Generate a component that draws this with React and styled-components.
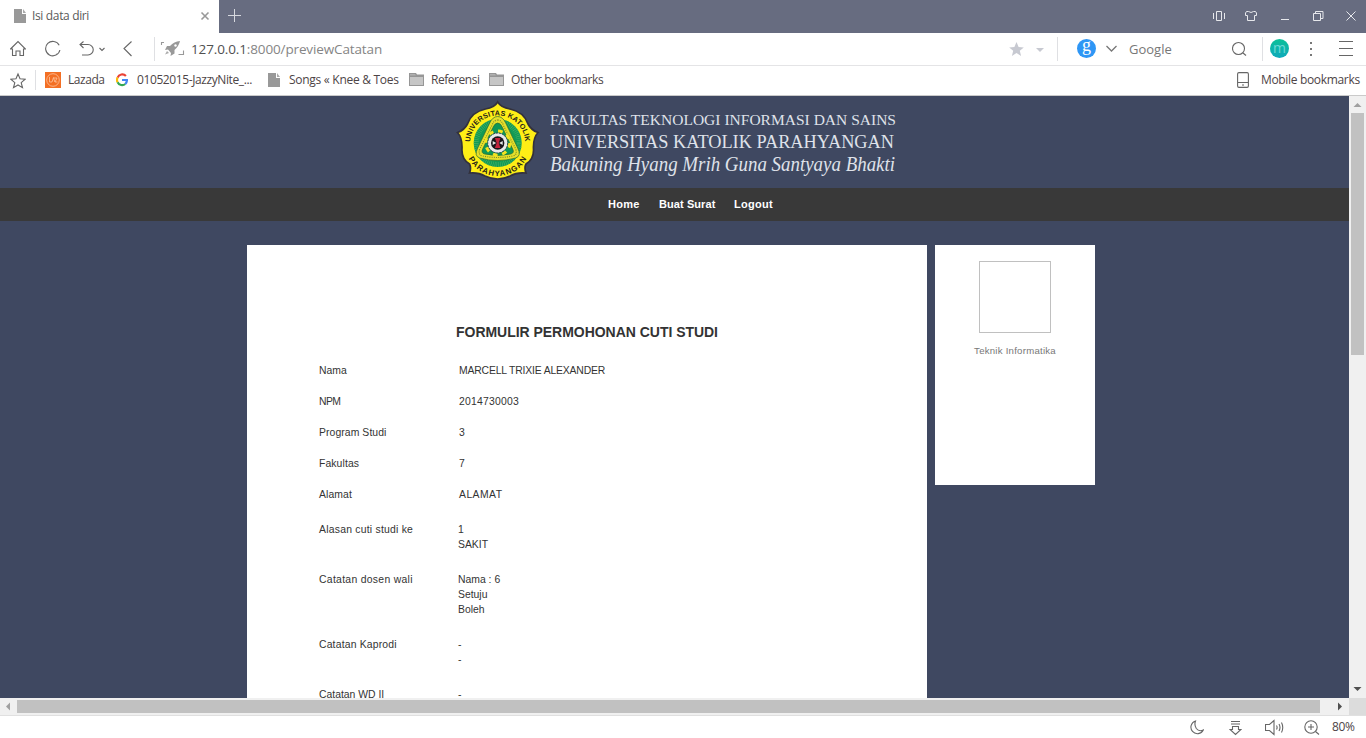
import React from "react";
import styled, { createGlobalStyle } from "styled-components";

const GlobalStyle = createGlobalStyle`
  * { box-sizing: border-box; }
  html, body { margin: 0; padding: 0; overflow: hidden; }
  body { font-family: "Open Sans", "Noto Sans", sans-serif; font-size: 12px; color: #4a4a4a; }
`;

const Window = styled.div`
  width: 1366px;
  height: 738px;
  display: flex;
  flex-direction: column;
  background: #fff;
  overflow: hidden;
`;

const TabBar = styled.div`
  height: 33px;
  flex: none;
  display: flex;
  background: #676c80;
`;

const Tab = styled.div`
  width: 219px;
  height: 33px;
  display: flex;
  background: #fff;
  padding-left: 14px;
`;

const Toolbar = styled.div`
  height: 33px;
  flex: none;
  display: flex;
  border-bottom: 1px solid #e4e4e6;
`;

const BookmarksBar = styled.div`
  height: 30px;
  flex: none;
  display: flex;
  border-bottom: 1px solid #cacaca;
`;

const Icon = styled.svg`
  flex: none;
  display: block;
  height: 100%;
  width: ${(p) => p.$w}px;
  margin-left: ${(p) => p.$gap || 0}px;
  fill: none;
  stroke: ${(p) => p.$color || "#666"};
  stroke-width: 1.1;
`;

const Label = styled.span`
  flex: none;
  display: block;
  width: ${(p) => p.$w}px;
  margin-left: ${(p) => p.$gap || 0}px;
  line-height: ${(p) => p.$line}px;
  font-size: ${(p) => p.$size || 12}px;
  letter-spacing: ${(p) => p.$spacing || 0}px;
  color: ${(p) => p.$color || "#4d4446"};
  white-space: nowrap;
`;

const Host = styled.span`
  color: #505050;
`;

const Divider = styled.div`
  flex: none;
  width: 1px;
  height: ${(p) => p.$h}px;
  margin: 4px 0 0 ${(p) => p.$gap}px;
  background: #dfe0e3;
`;

const Spacer = styled.div`
  flex: 1;
`;

const Badge = styled.div`
  flex: none;
  width: 19px;
  height: 19px;
  margin: 6px 0 0 ${(p) => p.$gap}px;
  border-radius: 50%;
  background: ${(p) => p.$bg};
  color: ${(p) => p.$color};
  text-align: center;
  font: ${(p) => p.$font};
`;

const Viewport = styled.div`
  flex: none;
  height: 602px;
  display: flex;
`;

const Page = styled.div`
  width: 1349px;
  height: 602px;
  background: #3f4861;
  overflow: hidden;
  font-family: "Liberation Sans", Arial, sans-serif;
`;

const Banner = styled.header`
  height: 92px;
  padding: 4px 0 0 455px;
`;

const LogoArt = styled.svg`
  display: block;
  overflow: visible;
`;

const Nav = styled.nav`
  height: 33px;
  display: flex;
  gap: 19px;
  padding-left: 608px;
  background: #393939;
`;

const NavLink = styled.a`
  width: ${(p) => p.$w}px;
  line-height: 32px;
  font-size: 11px;
  font-weight: bold;
  letter-spacing: ${(p) => p.$spacing}px;
  color: #fff;
  white-space: nowrap;
`;

const Content = styled.main`
  display: flex;
  align-items: flex-start;
  gap: 8px;
  padding: 24px 0 0 247px;
`;

const Paper = styled.section`
  width: 680px;
  height: 700px;
  flex: none;
  padding: 79px 72px 0;
  background: #fff;
  color: #333;
`;

const Title = styled.h1`
  margin: 0 0 23px;
  text-align: center;
  font-size: 14px;
  line-height: 16px;
  font-weight: bold;
  letter-spacing: -0.03px;
  white-space: nowrap;
`;

const Row = styled.div`
  display: flex;
  font-size: 10.4px;
  line-height: 15px;
  margin-bottom: ${(p) => p.$after}px;
`;

const Key = styled.div`
  width: ${(p) => p.$w}px;
  letter-spacing: ${(p) => p.$spacing || 0}px;
  white-space: nowrap;
`;

const Value = styled.div`
  letter-spacing: ${(p) => p.$spacing || 0}px;
  white-space: nowrap;
`;

const Profile = styled.aside`
  width: 160px;
  height: 240px;
  flex: none;
  display: flex;
  flex-direction: column;
  align-items: center;
  padding-top: 16px;
  background: #fff;
`;

const Photo = styled.div`
  width: 72px;
  height: 72px;
  border: 1px solid #c0c0c0;
`;

const Major = styled.div`
  margin-top: 11px;
  font-size: 9.6px;
  line-height: 14px;
  letter-spacing: 0.25px;
  color: #777;
`;

const VScroll = styled.div`
  width: 17px;
  display: flex;
  flex-direction: column;
  align-items: center;
  background: #f0f0f0;
`;

const VThumb = styled.div`
  width: 13px;
  height: 242px;
  background: #c1c1c1;
`;

const HScroll = styled.div`
  height: 18px;
  flex: none;
  display: flex;
  background: #f0f0f0;
  border-bottom: 1px solid #e0e0e0;
`;

const HThumb = styled.div`
  width: 1303px;
  height: 13px;
  margin-top: 2px;
  background: #c1c1c1;
`;

const Corner = styled.div`
  width: 17px;
  height: 17px;
  background: #dcdcdc;
`;

const Arrow = styled.svg`
  display: block;
  flex: none;
  width: ${(p) => p.$w || 17}px;
  height: 17px;
  fill: ${(p) => p.$color};
`;

const StatusBar = styled.div`
  height: 22px;
  display: flex;
`;

const FileIcon = ({ gap, h, top }) => (
  <Icon $w={12} $gap={gap} viewBox={`0 0 12 ${h}`}>
    <g stroke="none">
      <path d={`M0 ${top}h8v5h4v9H0z`} fill="#999" />
      <path d={`M9 ${top}l3 4H9z`} fill="#aaa" />
    </g>
  </Icon>
);

const FolderIcon = ({ gap }) => (
  <Icon $w={15} $gap={gap} viewBox="0 0 15 29">
    <g stroke="none">
      <path d="M0 7h7l1 1.5h7V20H0z" fill="#969696" />
      <path d="M1 11h13v8H1z" fill="#c6c6c6" />
      <path d="M1 8h5l1 1.5H1z" fill="#b0b0b0" />
    </g>
  </Icon>
);

const Crest = () => (
  <g transform="translate(2 1)">
    <defs>
      <path id="crestTop" d="M13.200 42A27.500 27.500 0 0 1 68.200 42" />
      <path id="crestBottom" d="M7.700 42A33 33 0 0 0 73.700 42" />
    </defs>
    <path
      d="M40.700 1Q44 6.500 53 8Q67 11 71 23Q74 29 81 31.500Q76 37 76.500 48Q77 58 69 63Q67 67 69 72Q60 71 53 75Q47 78 40.700 78Q34 78 28 75Q21 71 12.500 72Q14.500 67 12.500 63Q4.500 58 5 48Q5.500 37 .5 31.500Q7.500 29 10.500 23Q14.500 11 28.500 8Q37.500 6.500 40.700 1Z"
      fill="#ffee16"
      stroke="#33313c"
      strokeWidth="1.700"
    />
    <g transform="translate(.7 0)">
      <circle cx="40" cy="42" r="24" fill="#129a55" />
      <circle cx="40" cy="42" r="21.500" fill="none" stroke="#54b36a" strokeWidth="5" strokeDasharray=".5 1.400" />
      <path d="M40 15.500Q45 15.500 48 22L60 47Q64 55 58 57Q40 62 22 57Q16 55 20 47L32 22Q35 15.500 40 15.500Z" fill="#e6e02a" stroke="#2b6a34" strokeWidth=".7" />
      <path d="M40 22Q43 22 45 27L55 48Q57 52 53 53Q40 56 27 53Q23 52 25 48L35 27Q37 22 40 22Z" fill="#0e9857" stroke="#2b6a34" strokeWidth=".7" />
      <path d="M40 19Q44 19 46 25L58 48Q60 54 55 55Q40 58 25 55Q20 54 22 48L34 25Q36 19 40 19Z" fill="none" stroke="#7f8a28" strokeWidth="1.200" strokeDasharray="1 1.2" />
      <circle cx="40" cy="42" r="12" fill="none" stroke="#f4e31f" strokeWidth="3" strokeDasharray="4.700 4.725" />
      <circle cx="40" cy="42" r="10" fill="#e9e9e9" stroke="#35404a" strokeWidth="1" strokeDasharray="2 1" />
      <circle cx="40" cy="42" r="6.700" fill="#18151a" />
      <path d="M37.200 37h5.600L41 42l1.800 5h-5.600L39 42z" fill="#c3223c" />
      <path d="M35 40l3.500 2-3.500 2zM45 40l-3.500 2 3.500 2z" fill="#e6e6e6" />
    </g>
    <g fill="#262318" fontFamily="Liberation Sans, Arial, sans-serif">
      <text fontSize="7.200" fontWeight="bold">
        <textPath href="#crestTop" startOffset="1" textLength="84">UNIVERSITAS KATOLIK</textPath>
      </text>
      <text fontSize="7.800" fontWeight="bold">
        <textPath href="#crestBottom" startOffset="16" textLength="71">PARAHYANGAN</textPath>
      </text>
    </g>
  </g>
);

const Logo = () => (
  <LogoArt width="450" height="84" viewBox="0 0 450 84">
    <Crest />
    <g fill="#dfe2ea" fontFamily="Liberation Serif, Times New Roman, serif">
      <text x="95" y="25" fontSize="15.5" textLength="346" lengthAdjust="spacingAndGlyphs">FAKULTAS TEKNOLOGI INFORMASI DAN SAINS</text>
      <text x="95" y="48" fontSize="19" textLength="344" lengthAdjust="spacingAndGlyphs">UNIVERSITAS KATOLIK PARAHYANGAN</text>
      <text x="95" y="71" fontSize="21" fontStyle="italic" textLength="345" lengthAdjust="spacingAndGlyphs">Bakuning Hyang Mrih Guna Santyaya Bhakti</text>
    </g>
  </LogoArt>
);

const rows = [
  { k: "Nama", v: ["MARCELL TRIXIE ALEXANDER"], after: 16, vs: -0.17 },
  { k: "NPM", v: ["2014730003"], after: 16, ks: -0.6, vs: 0.23 },
  { k: "Program Studi", v: ["3"], after: 16, ks: 0.08 },
  { k: "Fakultas", v: ["7"], after: 16, ks: 0.1 },
  { k: "Alamat", v: ["ALAMAT"], after: 20, ks: 0.1, vs: 0.45 },
  { k: "Alasan cuti studi ke", v: ["1", "SAKIT"], after: 20, w: 139, ks: 0.23 },
  { k: "Catatan dosen wali", v: ["Nama : 6", "Setuju", "Boleh"], after: 20, w: 139, ks: 0.3 },
  { k: "Catatan Kaprodi", v: ["-", "-"], after: 20, w: 139, ks: 0.17 },
  { k: "Catatan WD II", v: ["-"], after: 20, w: 139 },
];

export default function App() {
  return (
    <Window>
      <GlobalStyle />
      <TabBar>
        <Tab>
          <FileIcon gap={0} h={33} top={9} />
          <Label $w={57} $gap={6} $line={32} $color="#5a5a5a" $spacing={-0.35}>Isi data diri</Label>
          <Icon $w={10} $gap={111} $color="#999" viewBox="0 0 10 33">
            <path d="M1.500 12.500l7 7M8.500 12.500l-7 7" strokeWidth="1.6" />
          </Icon>
        </Tab>
        <Icon $w={13} $gap={9} $color="#d7d9df" viewBox="0 0 13 33">
          <path d="M0 15.500h13M6.500 9v13" strokeWidth="1" />
        </Icon>
        <Spacer />
        <Icon $w={14} $color="#e7e8ec" viewBox="0 0 14 33">
          <path d="M4.500 11.500h5v9h-5zM1.500 13v6M12.500 13v6" strokeWidth="1" />
        </Icon>
        <Icon $w={12} $gap={19} $color="#e7e8ec" viewBox="0 0 12 33">
          <path d="M3.500 11.500h-2l-1 1.500v2.500h2v5h7v-5h2V13l-1-1.500h-2q-2.500 2-5 0z" strokeWidth="1" />
        </Icon>
        <Icon $w={8} $gap={24} $color="#e7e8ec" viewBox="0 0 8 33">
          <path d="M0 19.500h8" strokeWidth="1" />
        </Icon>
        <Icon $w={11} $gap={24} $color="#e7e8ec" viewBox="0 0 11 33">
          <path d="M.5 13.500h7v7h-7zM2.500 13v-1.500h7.500v7H8" strokeWidth="1" />
        </Icon>
        <Icon $w={10} $gap={22} $color="#e7e8ec" viewBox="0 0 10 33">
          <path d="M.5 11.500l9 9M9.500 11.500l-9 9" strokeWidth="1" />
        </Icon>
        <Icon $w={10} viewBox="0 0 10 33" />
      </TabBar>

      <Toolbar>
        <Icon $w={16} $gap={10} viewBox="0 0 16 32">
          <path d="M.5 16L8 8.500l7.500 7.500h-2v6.500H10V18H6v4.500H2.500V16z" />
        </Icon>
        <Icon $w={16} $gap={19} viewBox="0 0 16 32">
          <path d="M14.900 17A7.200 7.200 0 1 1 14.200 12.200M12.400 20.600l-1 1" />
        </Icon>
        <Icon $w={15} $gap={18} viewBox="0 0 15 32">
          <path d="M4.500 8.500L1 11.500l3.500 3.500M1 11.500h8a5 5 0 0 1 0 10.500H3" />
        </Icon>
        <Icon $w={6} $gap={5} viewBox="0 0 6 32">
          <path d="M.5 15L3 17.500 5.500 15" />
        </Icon>
        <Icon $w={9} $gap={18} viewBox="0 0 9 32">
          <path d="M8.500 8.500L1 15.500l7.500 7.500" />
        </Icon>
        <Divider $gap={22} $h={24} />
        <Icon $w={25} $gap={5} $color="#999" viewBox="0 0 25 32">
          <path d="M1.500 12V9.500H4M23.500 17.500v4h-5" />
          <path d="M20 8Q14 8.500 10 13H7l-2 4 3-.5 3 3.500-.5 3 4-2.500V17Q19 13 20 8z" fill="#999" stroke="none" />
          <path d="M7 18l-2 3.500L9 20" fill="#aaa" stroke="none" />
          <circle cx="15.500" cy="12.500" r="1.200" fill="#fff" stroke="none" />
        </Icon>
        <Label $w={193} $gap={6} $line={32} $size={13.5} $color="#858585" $spacing={-0.13}>
          <Host>127.0.0.1</Host>:8000/previewCatatan
        </Label>
        <Spacer />
        <Icon $w={15} viewBox="0 0 15 32">
          <path d="M7.500 9l2.100 5 5.200.4-4 3.400 1.300 5.200-4.600-2.900L2.900 23l1.300-5.200-4-3.400 5.200-.4z" fill="#c7c9d1" stroke="none" />
        </Icon>
        <Icon $w={8} $gap={12} viewBox="0 0 8 32">
          <path d="M0 15h8l-4 4z" fill="#c7c9d1" stroke="none" />
        </Icon>
        <Divider $gap={13} $h={24} />
        <Badge $gap={19} $bg="#2e96f5" $color="#fff" $font='18px/13px "Liberation Serif", serif'>g</Badge>
        <Icon $w={11} $gap={10} $color="#777" viewBox="0 0 11 32">
          <path d="M.5 13L5.500 18l5-5" strokeWidth="1.300" />
        </Icon>
        <Label $w={45} $gap={12} $line={32} $size={13} $color="#777">Google</Label>
        <Icon $w={15} $gap={58} viewBox="0 0 15 32">
          <circle cx="6.500" cy="15.500" r="6" />
          <path d="M11 20l3 2.500" />
        </Icon>
        <Divider $gap={15} $h={24} />
        <Badge $gap={7} $bg="linear-gradient(#0cc098, #0fa9bb)" $color="#6fd9d6" $font='14px/17px "Open Sans", sans-serif'>m</Badge>
        <Icon $w={2} $gap={21} viewBox="0 0 2 32">
          <path d="M0 9h2v2H0zM0 15h2v2H0zM0 21h2v2H0z" fill="#777" stroke="none" />
        </Icon>
        <Icon $w={14} $gap={27} viewBox="0 0 14 32">
          <path d="M0 8.500h14M0 15.500h14M0 22.500h14" strokeWidth="1" />
        </Icon>
        <Icon $w={13} viewBox="0 0 13 32" />
      </Toolbar>

      <BookmarksBar>
        <Icon $w={16} $gap={10} viewBox="0 0 16 29">
          <path d="M8 8l2 4.800 5.200.4-4 3.500 1.300 5L8 19l-4.500 2.700 1.300-5-4-3.500 5.200-.4z" />
        </Icon>
        <Divider $gap={9} $h={20} />
        <Icon $w={16} $gap={9} viewBox="0 0 16 29">
          <path d="M0 6h16v16H0z" fill="#f36f24" stroke="none" />
          <circle cx="8" cy="14" r="6.300" stroke="#ffc49e" strokeWidth=".8" />
          <path d="M4.500 11v5H7M7 16l1.500-4.500 1.300 4.500M9 12h3l-2 4h2.500" stroke="#ffc49e" strokeWidth=".8" />
        </Icon>
        <Label $w={36} $gap={7} $line={28} $spacing={-0.45}>Lazada</Label>
        <Icon $w={12} $gap={12} viewBox="0 0 12 29">
          <path d="M9.900 10A5 5 0 0 0 1.600 11.600" stroke="#ea4335" strokeWidth="2.200" />
          <path d="M1.600 11.600a5 5 0 0 0 0 4.700" stroke="#fbbc05" strokeWidth="2.200" />
          <path d="M1.600 16.300A5 5 0 0 0 9.300 18" stroke="#34a853" strokeWidth="2.200" />
          <path d="M9.300 18A5 5 0 0 0 10.900 14H6" stroke="#4285f4" strokeWidth="2.200" />
        </Icon>
        <Label $w={116} $gap={9} $line={28} $spacing={-0.4}>01052015-JazzyNite_...</Label>
        <FileIcon gap={15} h={29} top={7} />
        <Label $w={111} $gap={9} $line={28} $spacing={-0.28}>Songs « Knee &amp; Toes</Label>
        <FolderIcon gap={9} />
        <Label $w={49} $gap={7} $line={28} $spacing={-0.45}>Referensi</Label>
        <FolderIcon gap={9} />
        <Label $w={93} $gap={7} $line={28} $spacing={-0.42}>Other bookmarks</Label>
        <Spacer />
        <Icon $w={12} viewBox="0 0 12 29">
          <rect x=".6" y="6.600" width="10.800" height="14.800" rx="1.300" />
          <path d="M1 16.500h10M5 19h2" />
        </Icon>
        <Label $w={105} $gap={12} $line={28} $spacing={-0.33}>Mobile bookmarks</Label>
      </BookmarksBar>

      <Viewport>
        <Page>
          <Banner><Logo /></Banner>
          <Nav>
            <NavLink $w={32} $spacing={0.25}>Home</NavLink>
            <NavLink $w={56} $spacing={0.08}>Buat Surat</NavLink>
            <NavLink $w={40} $spacing={0.3}>Logout</NavLink>
          </Nav>
          <Content>
            <Paper>
              <Title>FORMULIR PERMOHONAN CUTI STUDI</Title>
              {rows.map((r) => (
                <Row key={r.k} $after={r.after}>
                  <Key $w={r.w || 140} $spacing={r.ks}>{r.k}</Key>
                  <Value $spacing={r.vs}>
                    {r.v.map((line, i) => <div key={i}>{line}</div>)}
                  </Value>
                </Row>
              ))}
            </Paper>
            <Profile>
              <Photo />
              <Major>Teknik Informatika</Major>
            </Profile>
          </Content>
        </Page>
        <VScroll>
          <Arrow $color="#a0a0a0" viewBox="0 0 17 17"><path d="M4.500 11h8L8.500 7z" /></Arrow>
          <VThumb />
          <Spacer />
          <Arrow $color="#505050" viewBox="0 0 17 17"><path d="M4.500 6h8l-4 4z" /></Arrow>
        </VScroll>
      </Viewport>

      <HScroll>
        <Arrow $color="#a0a0a0" viewBox="0 0 17 17"><path d="M10 4.500v8L6 8.500z" /></Arrow>
        <HThumb />
        <Arrow $w={29} $color="#505050" viewBox="0 0 29 17"><path d="M18 4.500v8l4-4z" /></Arrow>
        <Corner />
      </HScroll>

      <StatusBar>
        <Spacer />
        <Icon $w={14} viewBox="0 0 14 22">
          <path d="M5.500 5A6.500 6.500 0 1 0 13.300 14Q9 16 6.300 12.500Q4 9 5.500 5z" />
        </Icon>
        <Icon $w={13} $gap={25} viewBox="0 0 13 22">
          <path d="M2 5.500h9M2 8h9M3.500 10.500h6v3H12l-5.500 5L1 13.500h2.500z" />
        </Icon>
        <Icon $w={19} $gap={23} viewBox="0 0 19 22">
          <path d="M.5 8.500h4l4.500-4v14l-4.500-4h-4zM11.500 9.500q1.200 2 0 4M14 8q2 3.500 0 7M16.500 6.500q2.500 5 0 10" />
        </Icon>
        <Icon $w={16} $gap={20} viewBox="0 0 16 22">
          <circle cx="7" cy="11" r="6.200" />
          <path d="M4 11h6M7 8v6M11.500 15.500l3.500 3" />
        </Icon>
        <Label $w={34} $gap={12} $line={22} $spacing={-0.4}>80%</Label>
      </StatusBar>
    </Window>
  );
}
